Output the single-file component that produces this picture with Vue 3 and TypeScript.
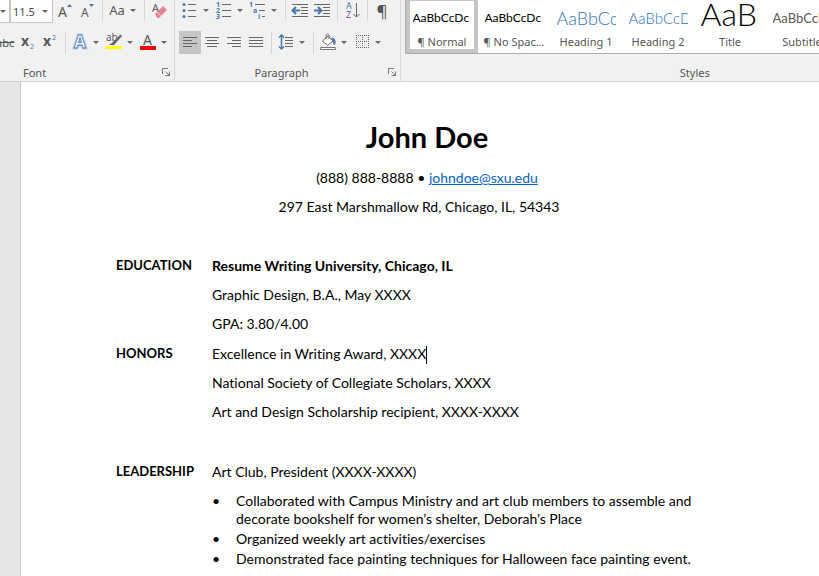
<script setup lang="ts">
import { ref } from 'vue'

interface StyleItem {
  name: string
  sample: string
  kind: string
}

const fontSize = ref('11.5')
const activeStyle = ref('¶ Normal')

const styles: StyleItem[] = [
  { name: '¶ Normal', sample: 'AaBbCcDc', kind: 'body' },
  { name: '¶ No Spac...', sample: 'AaBbCcDc', kind: 'body' },
  { name: 'Heading 1', sample: 'AaBbCc', kind: 'heading1' },
  { name: 'Heading 2', sample: 'AaBbCcD', kind: 'heading2' },
  { name: 'Title', sample: 'AaB', kind: 'title' },
  { name: 'Subtitle', sample: 'AaBbCcD', kind: 'subtitle' },
]

const duties: string[] = [
  'Collaborated with Campus Ministry and art club members to assemble and decorate bookshelf for women’s shelter, Deborah’s Place',
  'Organized weekly art activities/exercises',
  'Demonstrated face painting techniques for Halloween face painting event.',
]
</script>

<template>
  <div class="app">
    <header class="ribbon">
      <section class="group font-group" aria-label="Font">
        <div class="row">
          <button class="combo-end" aria-label="Font name"><i class="caret"></i></button>
          <label class="size-box">
            <select v-model="fontSize" aria-label="Font size">
              <option>11.5</option>
              <option>12</option>
              <option>14</option>
            </select>
            <i class="caret"></i>
          </label>
          <button class="tool" aria-label="Grow font">
            <svg width="18" height="20" viewBox="0 0 18 20"><text x="2" y="17" font-size="14">A</text><path d="M11 7l2.500-3L16 7z" fill="#4a78ad" /></svg>
          </button>
          <button class="tool" aria-label="Shrink font">
            <svg width="18" height="20" viewBox="0 0 18 20"><text x="3" y="17" font-size="12">A</text><path d="M11 4l2.500 3L16 4z" fill="#4a78ad" /></svg>
          </button>
          <span class="sep"></span>
          <button class="tool split" aria-label="Change case"><span class="case">Aa</span><i class="caret"></i></button>
          <span class="sep"></span>
          <button class="tool" aria-label="Clear formatting">
            <svg width="18" height="20" viewBox="0 0 18 20"><text x="2" y="12" font-size="11">A</text><path d="M5 14l8-8 4 4-8 8H7z" fill="#e58593" /><path d="M7 12l4 4" stroke="#f6c6cc" /></svg>
          </button>
        </div>
        <div class="row">
          <button class="tool strike" aria-label="Strikethrough"><s>abc</s></button>
          <button class="tool" aria-label="Subscript">
            <svg width="18" height="20" viewBox="0 0 18 20"><text x="2" y="14" font-size="14" font-weight="bold">x</text><text x="11" y="17" font-size="7" class="blue">2</text></svg>
          </button>
          <button class="tool" aria-label="Superscript">
            <svg width="18" height="20" viewBox="0 0 18 20"><text x="2" y="14" font-size="14" font-weight="bold">x</text><text x="11" y="8" font-size="7" class="blue">2</text></svg>
          </button>
          <span class="sep"></span>
          <button class="tool split" aria-label="Text effects">
            <svg width="18" height="20" viewBox="0 0 18 20"><text x="3" y="16" font-size="17" font-weight="bold" class="glow">A</text><text x="3" y="16" font-size="17" font-weight="bold" class="outline">A</text></svg><i class="caret"></i>
          </button>
          <button class="tool split" aria-label="Highlight colour">
            <svg width="18" height="20" viewBox="0 0 18 20"><text x="1" y="9" font-size="10">ab</text><path d="M15.500 2.500l1.500 1.500-7 8-3 .500 1.500-3z" fill="#666" /><path d="M4 13l4-3 2 3z" fill="#666" /><path d="M1 14h16v3H1z" fill="#ff0" /></svg><i class="caret"></i>
          </button>
          <button class="tool split" aria-label="Font colour">
            <svg width="18" height="20" viewBox="0 0 18 20"><text x="4" y="13" font-size="14">A</text><path d="M1 14h16v4H1z" fill="#f00" /></svg><i class="caret"></i>
          </button>
        </div>
        <div class="foot">
          <span class="caption">Font</span>
          <button class="launcher" aria-label="Font settings"><svg width="9" height="9" viewBox="0 0 9 9"><path d="M.5 6V.5H6M3.500 3.500l4 4M7.500 3.500v4h-4" /></svg></button>
        </div>
      </section>

      <section class="group paragraph-group" aria-label="Paragraph">
        <div class="row">
          <button class="tool split" aria-label="Bullets">
            <svg width="18" height="20" viewBox="0 0 18 20"><g fill="#4a78ad"><circle cx="3" cy="4.500" r="1.500" /><circle cx="3" cy="10.500" r="1.500" /><circle cx="3" cy="16.500" r="1.500" /></g><path d="M7 4.500h8M7 10.500h8M7 16.500h8" class="line" /></svg><i class="caret"></i>
          </button>
          <button class="tool split" aria-label="Numbering">
            <svg width="18" height="20" viewBox="0 0 18 20"><g font-size="7" font-weight="bold" class="blue"><text x="1" y="7">1</text><text x="1" y="13">2</text><text x="1" y="19">3</text></g><path d="M7 4.500h9M7 10.500h9M7 16.500h9" class="line" /></svg><i class="caret"></i>
          </button>
          <button class="tool split" aria-label="Multilevel list">
            <svg width="18" height="20" viewBox="0 0 18 20"><g font-size="7" font-weight="bold" class="blue"><text x="0" y="7">1</text><text x="4" y="13">a</text><text x="9" y="19">i</text></g><path d="M6 4.500h10M10 10.500h6M13 16.500h3" class="line" /></svg><i class="caret"></i>
          </button>
          <span class="sep"></span>
          <button class="tool" aria-label="Decrease indent">
            <svg width="18" height="20" viewBox="0 0 18 20"><path d="M1 4.500h16M10 7.500h7M10 10.500h7M10 13.500h7M1 16.500h16" class="line" /><path d="M2 10.500h7M5 7l-3.500 3.500L5 14" class="arrow" /></svg>
          </button>
          <button class="tool" aria-label="Increase indent">
            <svg width="18" height="20" viewBox="0 0 18 20"><path d="M1 4.500h16M10 7.500h7M10 10.500h7M10 13.500h7M1 16.500h16" class="line" /><path d="M1 10.500h7M5 7l3.500 3.500L5 14" class="arrow" /></svg>
          </button>
          <span class="sep"></span>
          <button class="tool" aria-label="Sort">
            <svg width="18" height="20" viewBox="0 0 18 20"><text x="3" y="9" font-size="9" class="blue">A</text><text x="3" y="18" font-size="9" class="purple">Z</text><path d="M13.500 3v14M10.500 14l3 3 3-3" class="line" /></svg>
          </button>
          <span class="sep"></span>
          <button class="tool pilcrow" aria-label="Show marks">¶</button>
        </div>
        <div class="row">
          <button class="tool pressed" aria-label="Align left">
            <svg width="18" height="20" viewBox="0 0 18 20"><path d="M2 5.500h14M2 8.500h9M2 11.500h14M2 14.500h9" class="line" /></svg>
          </button>
          <button class="tool" aria-label="Center">
            <svg width="18" height="20" viewBox="0 0 18 20"><path d="M2 5.500h14M4 8.500h10M2 11.500h14M4 14.500h10" class="line" /></svg>
          </button>
          <button class="tool" aria-label="Align right">
            <svg width="18" height="20" viewBox="0 0 18 20"><path d="M2 5.500h14M7 8.500h9M2 11.500h14M7 14.500h9" class="line" /></svg>
          </button>
          <button class="tool" aria-label="Justify">
            <svg width="18" height="20" viewBox="0 0 18 20"><path d="M2 5.500h14M2 8.500h14M2 11.500h14M2 14.500h14" class="line" /></svg>
          </button>
          <span class="sep"></span>
          <button class="tool split" aria-label="Line spacing">
            <svg width="18" height="20" viewBox="0 0 18 20"><path d="M8 5.500h8M8 8.500h8M8 11.500h8M8 14.500h8" class="line" /><path d="M4.500 3v14M2 5.500L4.500 3 7 5.500M2 14.500L4.500 17 7 14.500" class="arrow thin" /></svg><i class="caret"></i>
          </button>
          <span class="sep"></span>
          <button class="tool split" aria-label="Shading">
            <svg width="18" height="20" viewBox="0 0 18 20"><path d="M3.500 9l5.500-5 5 5-5.500 4.500z" fill="#fff" stroke="#666" /><path d="M7 7V3.500c0-2 3-2 3 0V7" class="line" /><path d="M12 5.500c4 0 5.500 3 4 7.500-2 0-2-3-2-4z" fill="#4a78ad" /><path d="M1.500 15.500h15v2h-15z" fill="#fff" stroke="#777" /></svg><i class="caret"></i>
          </button>
          <button class="tool split" aria-label="Borders">
            <svg width="18" height="20" viewBox="0 0 18 20"><path d="M3 3.500h13M3 9.500h13M3 15.500h13M3.500 3v13M9.500 3v13M15.500 3v13" class="line" stroke-dasharray="1 1" /></svg><i class="caret"></i>
          </button>
        </div>
        <div class="foot">
          <span class="caption">Paragraph</span>
          <button class="launcher" aria-label="Paragraph settings"><svg width="9" height="9" viewBox="0 0 9 9"><path d="M.5 6V.5H6M3.500 3.500l4 4M7.500 3.500v4h-4" /></svg></button>
        </div>
      </section>

      <section class="group styles-group" aria-label="Styles">
        <div class="gallery">
          <button
            v-for="item in styles"
            :key="item.name"
            class="style"
            :class="{ active: item.name === activeStyle }"
            @click="activeStyle = item.name"
          >
            <span class="sample" :class="item.kind">{{ item.sample }}</span>
            <span class="style-name">{{ item.name }}</span>
          </button>
        </div>
        <div class="foot">
          <span class="caption">Styles</span>
        </div>
      </section>
    </header>

    <main class="desk">
      <article class="page">
        <div class="text-area">
          <h1>John Doe</h1>
          <p class="center">(888) 888-8888 • <a href="mailto:johndoe@sxu.edu">johndoe@sxu.edu</a></p>
          <p class="center address">297 East Marshmallow Rd, Chicago, IL, 54343</p>

          <section class="entry first">
            <h2>EDUCATION</h2>
            <div>
              <p><strong>Resume Writing University, Chicago, IL</strong></p>
              <p>Graphic Design, B.A., May XXXX</p>
              <p>GPA: 3.80/4.00</p>
            </div>
          </section>
          <section class="entry">
            <h2>HONORS</h2>
            <div>
              <p>Excellence in Writing Award, XXXX<span class="cursor"></span></p>
              <p>National Society of Collegiate Scholars, XXXX</p>
              <p>Art and Design Scholarship recipient, XXXX-XXXX</p>
            </div>
          </section>
          <section class="entry spaced">
            <h2>LEADERSHIP</h2>
            <div>
              <p>Art Club, President (XXXX-XXXX)</p>
              <ul>
                <li v-for="duty in duties" :key="duty">{{ duty }}</li>
              </ul>
            </div>
          </section>
        </div>
      </article>
    </main>
  </div>
</template>

<style>
body {
  margin: 0;
}
</style>

<style scoped>
.app {
  display: flex;
  flex-direction: column;
  height: 100vh;
  overflow: hidden;
  background: #e6e6e6;
  font-family: 'Noto Sans', 'Open Sans', sans-serif;
  font-size: 11px;
  font-variant-ligatures: none;
  color: #555;
}
button {
  margin: 0;
  padding: 0;
  border: 0;
  background: none;
  color: inherit;
  font: inherit;
}
svg {
  display: block;
  flex: none;
}
svg text {
  fill: #595959;
}
.ribbon {
  display: flex;
  flex: none;
  background: #f1f1f1;
  border-bottom: 1px solid #d2d2d2;
}
.group {
  display: flex;
  flex-direction: column;
  flex: none;
  box-sizing: border-box;
}
.font-group,
.paragraph-group {
  border-right: 1px solid #d8d8d8;
}
.font-group {
  width: 175px;
}
.paragraph-group {
  width: 226px;
}
.paragraph-group .row {
  padding-left: 4px;
}
.styles-group {
  flex: 1;
  min-width: 0;
  padding-left: 4px;
}
.row {
  display: flex;
  align-items: center;
  height: 20px;
  margin-bottom: 11px;
}
.row + .row {
  height: 23px;
  margin-bottom: 9px;
}
.row + .row svg {
  margin-bottom: 1px;
}
.tool {
  display: flex;
  align-items: center;
  justify-content: center;
  flex: none;
  width: 22px;
  height: 100%;
}
.split {
  width: 34px;
  justify-content: flex-start;
  padding-left: 2px;
  gap: 4px;
}
.pressed {
  background: #c6c6c6;
}
.caret {
  flex: none;
  width: 0;
  height: 0;
  border: 3px solid transparent;
  border-top-color: #666;
  border-bottom-width: 0;
}
.sep {
  flex: none;
  width: 1px;
  height: 22px;
  margin: 0 3px 0 4px;
  background: #d6d6d6;
}
.combo-end,
.size-box {
  display: flex;
  align-items: center;
  align-self: flex-start;
  height: 23px;
  box-sizing: border-box;
  background: #fff;
  border: solid #c6c6c6;
  border-width: 0 1px 1px;
}
.combo-end {
  width: 10px;
  border-left-width: 0;
}
.size-box {
  position: relative;
  width: 43px;
  margin-right: 1px;
}
.size-box .caret {
  position: absolute;
  right: 4px;
  pointer-events: none;
}
.size-box select {
  appearance: none;
  width: 100%;
  padding: 0 0 0 2px;
  border: 0;
  background: none;
  color: #444;
  font: inherit;
}
.case {
  width: 18px;
  font-size: 13px;
  text-align: center;
}
.strike {
  width: 17px;
  justify-content: flex-start;
  overflow: hidden;
}
.strike s {
  margin-left: -4px;
}
.pilcrow {
  font-size: 17px;
}
.line {
  fill: none;
  stroke: #666;
}
.arrow {
  fill: none;
  stroke: #4a78ad;
  stroke-width: 2;
}
.thin {
  stroke-width: 1.5;
}
svg .blue,
svg .blue text {
  fill: #4a78ad;
}
svg .purple {
  fill: #8a4ba8;
}
svg .glow {
  fill: none;
  stroke: #b9d2ef;
  stroke-width: 3;
}
svg .outline {
  fill: #fff;
  stroke: #4a78ad;
  stroke-width: 0.8;
}
.foot {
  display: flex;
  align-items: center;
  height: 18px;
  padding-right: 3px;
}
.caption {
  flex: 1;
  text-align: center;
}
.font-group .caption {
  padding-left: 23px;
  text-align: left;
}
.styles-group .caption {
  padding-left: 41%;
}
.launcher svg {
  fill: none;
  stroke: #777;
}
.gallery {
  display: flex;
  height: 53px;
  margin-bottom: 9px;
  overflow: hidden;
  background: #fff;
  border: solid #ababab;
  border-width: 0 0 1px 1px;
}
.style {
  display: flex;
  flex-direction: column;
  align-items: center;
  flex: none;
  box-sizing: border-box;
  width: 72px;
  height: 53px;
  padding-top: 3px;
  border: solid transparent;
  border-width: 1px 4px 4px;
}
.active {
  border-color: #c6c6c6;
}
.sample {
  width: 59px;
  height: 28px;
  margin-bottom: 3px;
  overflow: hidden;
  white-space: nowrap;
  text-align: left;
  color: #000;
  font-family: Lato, sans-serif;
  font-size: 12px;
  line-height: 28px;
}
.style-name {
  line-height: 14px;
  white-space: nowrap;
}
.heading1,
.heading2 {
  color: #2e74b5;
  font-weight: 300;
}
.heading1 {
  font-size: 18px;
}
.heading2 {
  font-size: 15px;
}
.title {
  font-size: 32px;
  font-weight: 300;
  line-height: 20px;
}
.subtitle {
  color: #5a5a5a;
  font-size: 13px;
}
.desk {
  flex: 1;
  min-height: 0;
  padding-left: 20px;
}
.page {
  min-height: 100%;
  box-sizing: border-box;
  padding: 35px 24px 0 95px;
  background: #fff;
  border-left: 1px solid #c6c6c6;
  color: #000;
  font-family: Lato, sans-serif;
  font-size: 14px;
  line-height: 29px;
}
.text-area {
  max-width: 622px;
}
h1,
h2,
p,
ul {
  margin: 0;
  padding: 0;
}
h1 {
  margin-bottom: 6px;
  font-size: 29px;
  line-height: 40px;
  text-align: center;
}
h2 {
  font-size: 13px;
  line-height: 29px;
}
.center {
  text-align: center;
}
.address {
  padding-right: 16px;
}
a {
  color: #0563c1;
}
.entry {
  display: grid;
  grid-template-columns: 96px 1fr;
  margin-top: 1px;
}
.first {
  margin-top: 30px;
}
.spaced {
  margin-top: 31px;
}
.cursor {
  display: inline-block;
  width: 1px;
  height: 18px;
  vertical-align: middle;
  background: #000;
}
ul {
  display: grid;
  gap: 2px;
  padding-top: 6px;
  list-style: none;
}
li {
  display: grid;
  grid-template-columns: 24px 1fr;
  line-height: 18px;
}
li::before {
  content: '•';
}
</style>
